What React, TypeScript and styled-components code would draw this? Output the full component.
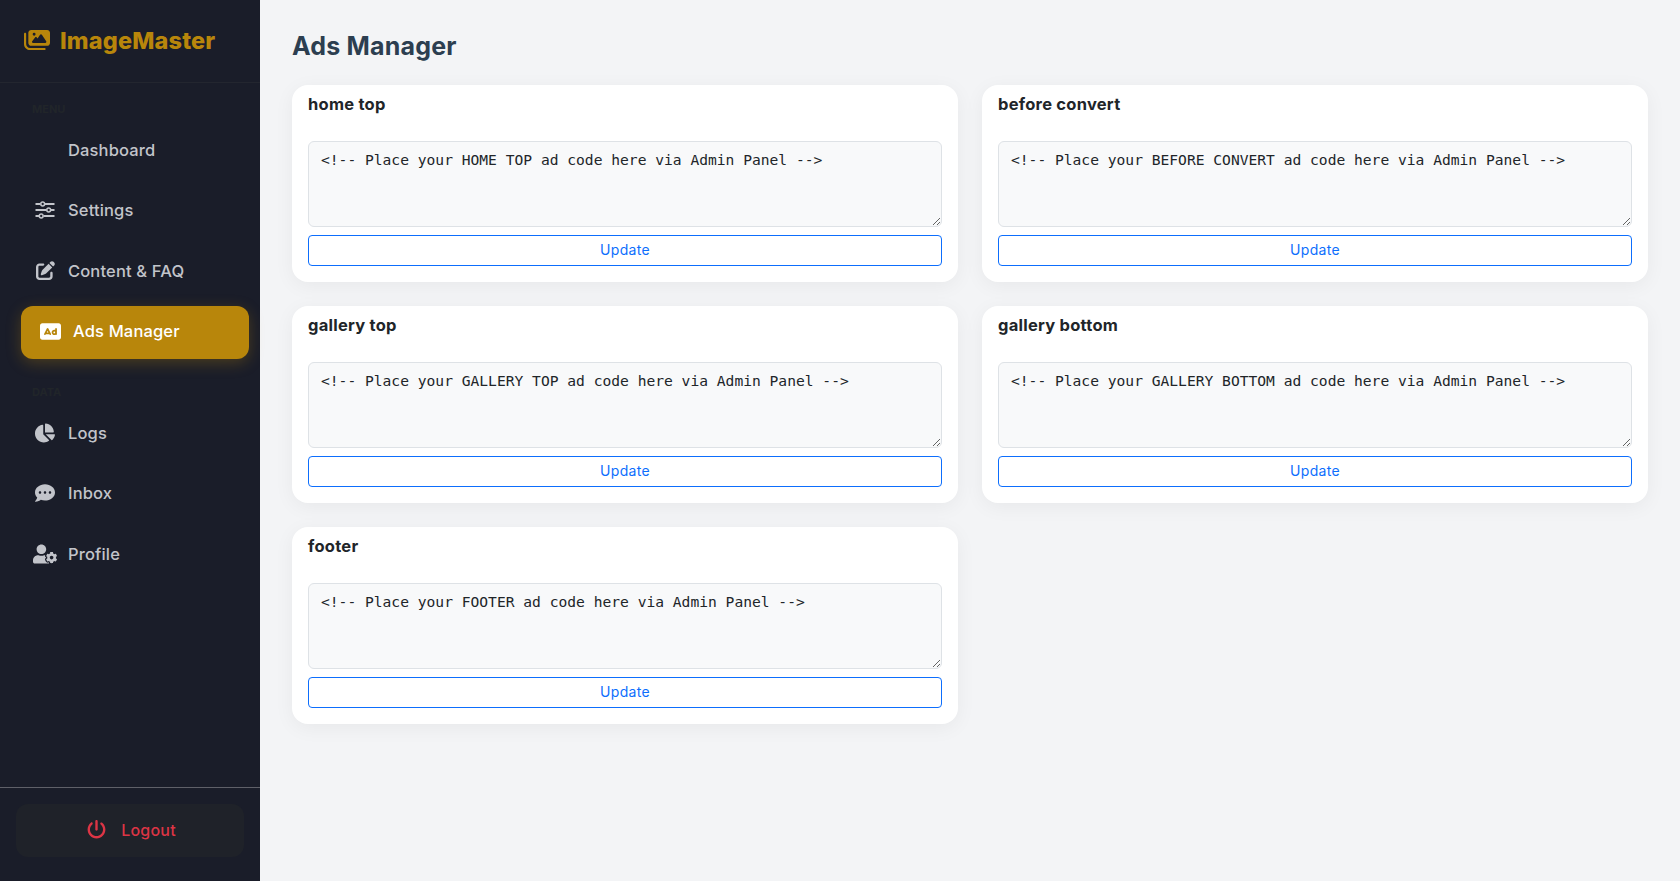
import React from 'react'
import styled, { createGlobalStyle } from 'styled-components'
import { FaChartPie, FaCommentDots, FaUserCog } from 'react-icons/fa'
import { FaImages, FaPenToSquare, FaPowerOff, FaRectangleAd } from 'react-icons/fa6'

const GlobalStyle = createGlobalStyle`
    * {
        box-sizing: border-box;
    }
    html, body {
        margin: 0;
        height: 100%;
    }
    body {
        background: #f3f4f6;
        font-family: Inter, "Noto Sans", sans-serif;
    }
`

const Layout = styled.div`
    display: flex;
    height: 881px;
`
const Sidebar = styled.aside`
    width: 260px;
    flex-shrink: 0;
    background: #1a1d29;
    display: flex;
    flex-direction: column;
`
const Brand = styled.div`
    height: 83px;
    padding: 0 24px 2px;
    display: flex;
    align-items: center;
    gap: 10px;
    color: #b8860b;
    font-size: 23.5px;
    font-weight: 800;
    letter-spacing: 0.15px;
    border-bottom: 1px solid #23262f;
`
const Nav = styled.nav`
    flex: 1;
    padding: 0 16px;
    display: flex;
    flex-direction: column;
`
const SectionLabel = styled.div<{ $top: number }>`
    margin: ${(p) => p.$top}px 0 8px 16px;
    height: 14px;
    line-height: 14px;
    font-size: 11px;
    font-weight: 700;
    color: #212529;
`
const NavItem = styled.a<{ $active?: boolean }>`
    display: flex;
    align-items: center;
    gap: 13px;
    height: 53px;
    margin-bottom: 7.5px;
    padding: 0 0 2px 19px;
    border-radius: 12px;
    font-size: 16.5px;
    font-weight: 500;
    letter-spacing: 0.15px;
    color: ${(p) => (p.$active ? '#ffffff' : '#c2c4ca')};
    background: ${(p) => (p.$active ? '#b8860b' : 'transparent')};
    box-shadow: ${(p) =>
        p.$active ? '0 4px 15px rgba(184, 134, 11, 0.3)' : 'none'};
    transform: ${(p) => (p.$active ? 'translateX(5px)' : 'none')};
`
const IconSlot = styled.span`
    width: 20px;
    height: 20px;
    display: flex;
    align-items: center;
    justify-content: center;
    font-size: 19px;

    svg {
        flex-shrink: 0;
    }
`
const SidebarFooter = styled.div`
    border-top: 1px solid #5f6068;
    padding: 16px;
    height: 94px;
`
const LogoutButton = styled.button`
    width: 100%;
    height: 53px;
    padding: 0 0 2px 3px;
    display: flex;
    align-items: center;
    justify-content: center;
    gap: 15px;
    border: none;
    border-radius: 12px;
    background: #1f2229;
    color: #dc3545;
    font-family: inherit;
    font-size: 16px;
    font-weight: 500;
    letter-spacing: 0.2px;
`
const Main = styled.main`
    flex: 1;
    padding: 32px 32px 0;
`
const PageTitle = styled.h1`
    margin: 0 0 24px;
    height: 29px;
    line-height: 29px;
    font-size: 25px;
    font-weight: 700;
    letter-spacing: 0.2px;
    color: #2c3e50;
`
const CardGrid = styled.div`
    display: grid;
    grid-template-columns: 1fr 1fr;
    column-gap: 24px;
    row-gap: 24px;
`
const Card = styled.section`
    height: 197px;
    padding: 8px 16px 16px;
    background: #fff;
    border-radius: 16px;
    box-shadow: 0 4px 20px rgba(0, 0, 0, 0.05);
    display: flex;
    flex-direction: column;
`
const CardTitle = styled.h2`
    margin: 0 0 26px;
    height: 22px;
    line-height: 22px;
    font-size: 16.5px;
    font-weight: 700;
    letter-spacing: 0.25px;
    color: #212529;
`
const CodeArea = styled.textarea`
    display: block;
    width: 100%;
    height: 86px;
    margin-bottom: 8px;
    padding: 6px 12px;
    background: #f8f9fa;
    border: 1px solid #dee2e6;
    border-radius: 6px;
    color: #212529;
    font-family: "DejaVu Sans Mono", "Liberation Mono", monospace;
    font-size: 14.62px;
    line-height: 24px;
    resize: vertical;
    outline: none;
`
const UpdateButton = styled.button`
    height: 31px;
    width: 100%;
    padding-bottom: 4px;
    background: #fff;
    border: 1px solid #0d6efd;
    border-radius: 4px;
    color: #0d6efd;
    font-family: inherit;
    font-size: 14px;
    letter-spacing: 0.3px;
`

const SlidersIcon = () => (
    <svg width="20" height="18" viewBox="0 0 20 18" fill="none" stroke="currentColor" strokeWidth="2">
        <path d="M0.5 3H5.5M10 3H19.5M0.5 9H11.5M16 9H19.5M0.5 15H4M8.5 15H19.5" />
        <circle cx="7.7" cy="3" r="1.9" strokeWidth="1.5" />
        <circle cx="13.7" cy="9" r="1.9" strokeWidth="1.5" />
        <circle cx="6.2" cy="15" r="1.9" strokeWidth="1.5" />
    </svg>
)

const menuItems = [
    { label: 'Dashboard' },
    { label: 'Settings', icon: <SlidersIcon /> },
    { label: 'Content & FAQ', icon: <FaPenToSquare /> },
    { label: 'Ads Manager', icon: <FaRectangleAd size={21} />, active: true },
]
const dataItems = [
    { label: 'Logs', icon: <FaChartPie size={20} /> },
    { label: 'Inbox', icon: <FaCommentDots size={20} /> },
    { label: 'Profile', icon: <FaUserCog size={24} /> },
]
const slots = ['home top', 'before convert', 'gallery top', 'gallery bottom', 'footer']

type Item = { label: string; icon?: React.ReactNode; active?: boolean }

const renderItem = (item: Item) => (
    <NavItem key={item.label} $active={item.active}>
        <IconSlot>{item.icon}</IconSlot>
        {item.label}
    </NavItem>
)

export default function App() {
    return (
        <Layout>
            <GlobalStyle />
            <Sidebar>
                <Brand>
                    <FaImages size={26} />
                    ImageMaster
                </Brand>
                <Nav>
                    <SectionLabel $top={19}>MENU</SectionLabel>
                    {menuItems.map(renderItem)}
                    <SectionLabel $top={19}>DATA</SectionLabel>
                    {dataItems.map(renderItem)}
                </Nav>
                <SidebarFooter>
                    <LogoutButton>
                        <FaPowerOff size={19} />
                        Logout
                    </LogoutButton>
                </SidebarFooter>
            </Sidebar>
            <Main>
                <PageTitle>Ads Manager</PageTitle>
                <CardGrid>
                    {slots.map((slot) => (
                        <Card key={slot}>
                            <CardTitle>{slot}</CardTitle>
                            <CodeArea
                                defaultValue={`<!-- Place your ${slot.toUpperCase()} ad code here via Admin Panel -->`}
                            />
                            <UpdateButton>Update</UpdateButton>
                        </Card>
                    ))}
                </CardGrid>
            </Main>
        </Layout>
    )
}
